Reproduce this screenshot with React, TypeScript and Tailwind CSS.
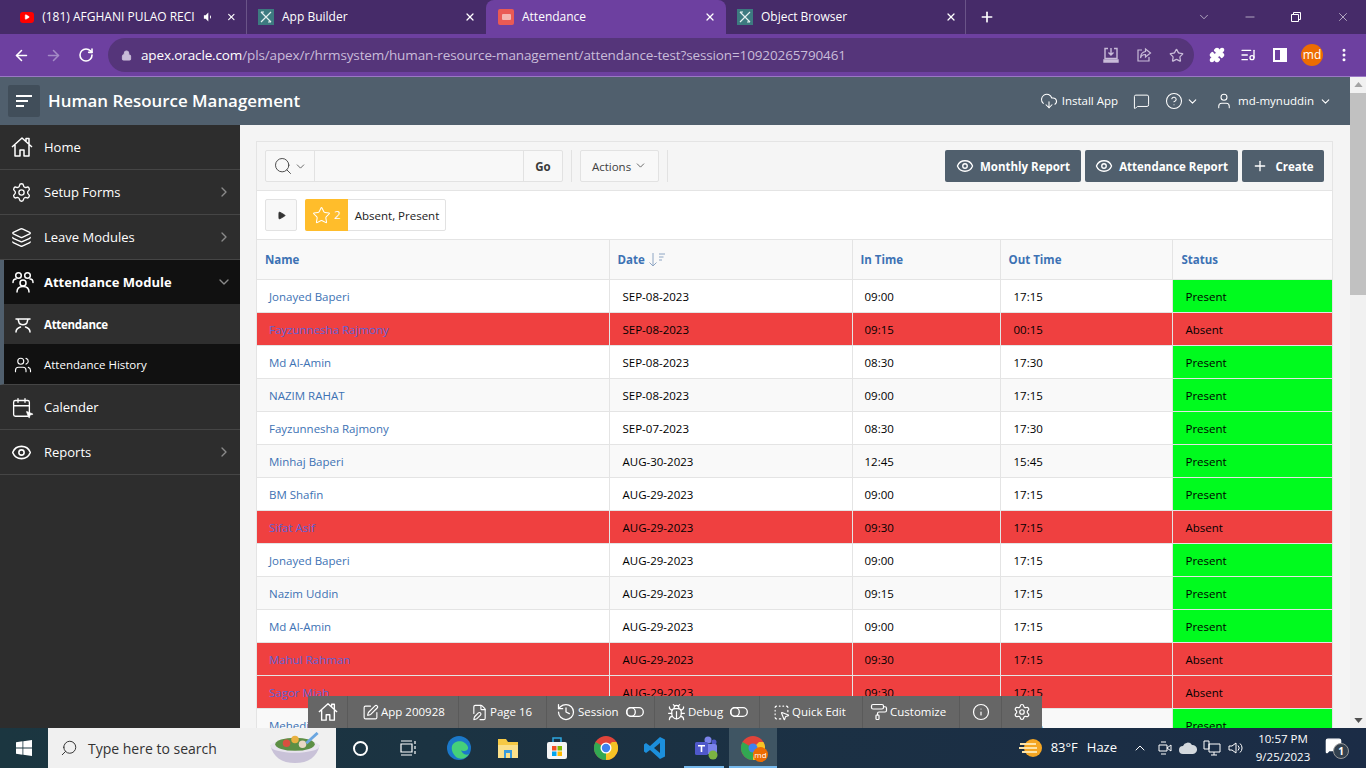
import {
  ArrowLeft,
  ArrowRight,
  Bug,
  Calendar,
  ChevronDown,
  ChevronRight,
  ChevronUp,
  CircleHelp,
  CloudDownload,
  Eye,
  FilePen,
  History,
  Info,
  Layers,
  ListMusic,
  Lock,
  MessageSquare,
  Minus,
  MousePointer2,
  MoreVertical,
  PaintRoller,
  Play,
  Plus,
  Puzzle,
  RotateCw,
  Search,
  Settings,
  SquareDashedMousePointer,
  SquarePen,
  Star,
  User,
  Users,
  X,
} from "lucide-react";

type Row = {
  name: string;
  date: string;
  inTime: string;
  outTime: string;
  status: "Present" | "Absent";
};

const rows: Row[] = [
  { name: "Jonayed Baperi", date: "SEP-08-2023", inTime: "09:00", outTime: "17:15", status: "Present" },
  { name: "Fayzunnesha Rajmony", date: "SEP-08-2023", inTime: "09:15", outTime: "00:15", status: "Absent" },
  { name: "Md Al-Amin", date: "SEP-08-2023", inTime: "08:30", outTime: "17:30", status: "Present" },
  { name: "NAZIM RAHAT", date: "SEP-08-2023", inTime: "09:00", outTime: "17:15", status: "Present" },
  { name: "Fayzunnesha Rajmony", date: "SEP-07-2023", inTime: "08:30", outTime: "17:30", status: "Present" },
  { name: "Minhaj Baperi", date: "AUG-30-2023", inTime: "12:45", outTime: "15:45", status: "Present" },
  { name: "BM Shafin", date: "AUG-29-2023", inTime: "09:00", outTime: "17:15", status: "Present" },
  { name: "Sifat Asif", date: "AUG-29-2023", inTime: "09:30", outTime: "17:15", status: "Absent" },
  { name: "Jonayed Baperi", date: "AUG-29-2023", inTime: "09:00", outTime: "17:15", status: "Present" },
  { name: "Nazim Uddin", date: "AUG-29-2023", inTime: "09:15", outTime: "17:15", status: "Present" },
  { name: "Md Al-Amin", date: "AUG-29-2023", inTime: "09:00", outTime: "17:15", status: "Present" },
  { name: "Mahul Rahman", date: "AUG-29-2023", inTime: "09:30", outTime: "17:15", status: "Absent" },
  { name: "Sagor Miah", date: "AUG-29-2023", inTime: "09:30", outTime: "17:15", status: "Absent" },
  { name: "Mehedi Hasan", date: "AUG-29-2023", inTime: "09:00", outTime: "17:15", status: "Present" },
];

function AppLogo() {
  return (
    <span className="flex h-4 w-4 items-center justify-center bg-[#3d7a80]">
      <svg viewBox="0 0 16 16" className="h-4 w-4" fill="none" stroke="#e6f1f1" strokeWidth="1.2">
        <path d="M3 3l10 10M13 3L3 13M3 3h3M10 13h3" />
      </svg>
    </span>
  );
}

function HomeIcon({ size }: { size: number }) {
  return (
    <svg viewBox="0 0 22 22" width={size} height={size} fill="none" stroke="currentColor" strokeWidth="1.5" strokeLinejoin="round">
      <path d="M1 11L11 2l10 9M4 9v11h5v-6h4v6h5V9M15 5V2.500h3V8" />
    </svg>
  );
}

function GroupIcon() {
  return (
    <svg viewBox="0 0 22 22" width={22} height={22} fill="none" stroke="currentColor" strokeWidth="1.5" strokeLinecap="round">
      <circle cx="6.500" cy="4.500" r="2.800" />
      <circle cx="15.500" cy="4.500" r="2.800" />
      <circle cx="11" cy="12" r="3" />
      <path d="M1 11.500c0-2.500 1.500-3.500 3-3.500M21 11.500c0-2.500-1.500-3.500-3-3.500M5 21c0-3.500 2.500-5.500 6-5.500s6 2 6 5.500" />
    </svg>
  );
}

function StudentIcon() {
  return (
    <svg viewBox="0 0 18 18" width={18} height={18} fill="none" stroke="currentColor" strokeWidth="1.5" strokeLinecap="round">
      <path d="M2 3h14M4 3l1 3.500c1 3 7 3 8 0L14 3M2 16c0-3.500 3-4.500 4.500-5M16 16c0-3.500-3-4.500-4.500-5" />
    </svg>
  );
}

function Tab({
  title,
  icon,
  className,
  extra,
}: {
  title: string;
  icon: React.ReactNode;
  className: string;
  extra?: React.ReactNode;
}) {
  return (
    <div className={`flex h-[34px] items-center text-[12px] ${className}`}>
      {icon}
      <span className="ml-[8px] flex-1 whitespace-nowrap">{title}</span>
      {extra}
      <X size={12} strokeWidth={2.5} className="text-white" />
    </div>
  );
}

function SideItem({
  icon,
  label,
  chevron,
}: {
  icon: React.ReactNode;
  label: string;
  chevron?: boolean;
}) {
  return (
    <div className="flex h-[45px] items-center border-b border-[#454545] pl-[11px] pr-[8px] text-white">
      <span className="w-[33px]">{icon}</span>
      <span className="flex-1 pt-[2px] text-[13px]">{label}</span>
      {chevron && <ChevronRight size={16} className="text-[#8a8a8a]" />}
    </div>
  );
}

function DevItem({
  icon,
  label,
  toggle,
  className,
}: {
  icon: React.ReactNode;
  label?: string;
  toggle?: boolean;
  className: string;
}) {
  return (
    <div className={`flex h-full items-center border-r border-[#5a5a5a] ${className}`}>
      {icon}
      {label && <span className="ml-[2px] whitespace-nowrap">{label}</span>}
      {toggle && (
        <svg viewBox="0 0 18 10" className="ml-[7px] h-[10px] w-[18px]" fill="none" stroke="white" strokeWidth="1.3">
          <rect x="0.700" y="0.700" width="16.600" height="8.600" rx="4.300" />
          <circle cx="5" cy="5" r="4.300" />
        </svg>
      )}
    </div>
  );
}

export default function App() {
  return (
    <div className="relative flex h-[768px] w-[1366px] flex-col overflow-hidden bg-[#f4f4f4] font-['Open_Sans',sans-serif] text-[11.5px] text-black">
      {/* browser tabs */}
      <div className="flex h-[34px] shrink-0 items-center bg-[#462b69] text-white">
        <Tab
          title="(181) AFGHANI PULAO RECI"
          className="w-[247px] border-r border-[#6a5488] pl-[20px] pr-[9px]"
          icon={
            <span className="flex h-[11px] w-[16px] items-center justify-center rounded-[3px] bg-[#f00]">
              <Play size={6} fill="white" stroke="white" />
            </span>
          }
          extra={
            <svg viewBox="0 0 12 12" className="ml-[8px] mr-[13px] h-3 w-3" fill="white">
              <path d="M1 4h2l3-3v10L3 8H1zM8 4v4l1-1V5z" />
            </svg>
          }
        />
        <Tab title="App Builder" className="w-[239px] pl-[11px] pr-[10px]" icon={<AppLogo />} />
        <Tab
          title="Attendance"
          className="w-[240px] rounded-t-[8px] bg-[#6d40a0] pl-[12px] pr-[10px]"
          icon={
            <span className="flex h-4 w-4 items-center justify-center rounded-[2px] bg-[#ea5a54]">
              <span className="h-[6px] w-[9px] rounded-[1px] bg-[#f5b5b0]" />
            </span>
          }
        />
        <Tab title="Object Browser" className="w-[240px] border-r border-[#6a5488] pl-[11px] pr-[8px]" icon={<AppLogo />} />
        <Plus size={16} strokeWidth={2.5} className="ml-[13px]" />
        <div className="ml-auto flex items-center pr-[16px]">
          <ChevronDown size={14} strokeWidth={1} className="mr-[32px]" />
          <Minus size={14} strokeWidth={1} className="mr-[33px]" />
          <svg viewBox="0 0 12 12" className="mr-[34px] h-3 w-3" fill="none" stroke="white">
            <path d="M1.500 3.500h7v7h-7zM3.500 3.500v-2h7v7h-2" />
          </svg>
          <X size={14} strokeWidth={1} />
        </div>
      </div>

      {/* address bar */}
      <div className="flex h-[43px] shrink-0 items-center border-b border-[#9a78c4] bg-[#6d40a0] text-white">
        <ArrowLeft size={17} strokeWidth={2.2} className="ml-[13px]" />
        <ArrowRight size={17} strokeWidth={2.2} className="ml-[15px] text-[#a48bc6]" />
        <RotateCw size={16} strokeWidth={2.4} className="ml-[16px]" />
        <div className="ml-[14px] flex h-[34px] w-[1086px] items-center rounded-full bg-[#55357a] pl-[13px] pr-[10px]">
          <Lock size={11} fill="#c9bcd9" stroke="#c9bcd9" />
          <span className="ml-[9px] text-[13.5px] tracking-[-0.13px] text-[#c9bcd9]">
            <span className="text-white">apex.oracle.com</span>
            /pls/apex/r/hrmsystem/human-resource-management/attendance-test?session=10920265790461
          </span>
          <div className="ml-auto flex items-center gap-[17px] text-[#c9bcd9]">
            <svg viewBox="0 0 16 16" className="h-4 w-4" fill="none" stroke="currentColor" strokeWidth="1.4">
              <path d="M5 1.500H2v10h12v-10h-3M8 1v7M5.500 5.500L8 8l2.500-2.500" />
              <path d="M1 13h14v2H1z" fill="currentColor" />
            </svg>
            <svg viewBox="0 0 16 16" className="h-4 w-4" fill="none" stroke="currentColor" strokeWidth="1.2">
              <path d="M6 3H2v11h11v-4M9.500 2l5 4-5 4V7.500C7 7.500 5 9 4.500 11c0-4 2-6 5-6.500z" />
            </svg>
            <Star size={15} />
          </div>
        </div>
        <Puzzle size={16} fill="white" className="ml-[15px]" />
        <ListMusic size={16} className="ml-[15px]" />
        <svg viewBox="0 0 16 16" className="ml-[16px] h-4 w-4" fill="white">
          <path d="M1 1h14v14H1zM3 3v10h5V3z" fillRule="evenodd" />
        </svg>
        <span className="ml-[13px] flex h-[22px] w-[22px] items-center justify-center rounded-full bg-[#ed6c02] text-[12px]">
          md
        </span>
        <MoreVertical size={16} strokeWidth={2.5} className="ml-[13px]" />
      </div>

      <div className="flex min-h-0 flex-1">
        <div className="flex min-w-0 flex-1 flex-col">
          {/* app header */}
          <div className="flex h-[48px] shrink-0 items-center bg-[#505f6d] text-white">
            <div className="ml-[8px] flex h-[32px] w-[32px] items-center justify-center rounded-[2px] bg-[#414e5a]">
              <svg viewBox="0 0 16 12" className="h-3 w-4" stroke="white" strokeWidth="2">
                <path d="M0 1h16M0 6h12M0 11h8" />
              </svg>
            </div>
            <span className="ml-[8px] text-[16.9px] font-semibold">Human Resource Management</span>
            <div className="ml-auto flex items-center pr-[18px] text-[11.5px]">
              <CloudDownload size={18} strokeWidth={1.4} />
              <span className="ml-[4px]">Install App</span>
              <MessageSquare size={17} strokeWidth={1.4} className="ml-[15px]" />
              <CircleHelp size={18} strokeWidth={1.4} className="ml-[15px]" />
              <ChevronDown size={13} className="ml-[3px]" />
              <User size={18} strokeWidth={1.4} className="ml-[16px]" />
              <span className="ml-[5px]">md-mynuddin</span>
              <ChevronDown size={13} className="ml-[5px]" />
            </div>
          </div>

          <div className="flex min-h-0 flex-1">
            {/* side nav */}
            <aside className="w-[240px] shrink-0 bg-[#2d2d2d]">
              <SideItem icon={<HomeIcon size={22} />} label="Home" />
              <SideItem icon={<Settings size={21} strokeWidth={1.5} />} label="Setup Forms" chevron />
              <SideItem icon={<Layers size={21} strokeWidth={1.5} />} label="Leave Modules" chevron />
              <div className="border-b border-[#454545] border-l-[4px] border-l-[#505f6d] bg-[#111111] text-white">
                <div className="flex h-[44px] items-center pl-[8px] pr-[8px]">
                  <span className="w-[32px]">
                    <GroupIcon />
                  </span>
                  <span className="flex-1 pt-[2px] text-[13px] font-bold">Attendance Module</span>
                  <ChevronDown size={16} className="text-[#8a8a8a]" />
                </div>
                <div className="flex h-[40px] items-center bg-[#2f2f2f] pl-[10px] pt-[1px]">
                  <span className="w-[30px]">
                    <StudentIcon />
                  </span>
                  <span className="text-[11.5px] font-bold tracking-[-0.3px]">Attendance</span>
                </div>
                <div className="flex h-[40px] items-center pl-[10px] pt-[1px]">
                  <span className="w-[30px]">
                    <Users size={18} strokeWidth={1.5} />
                  </span>
                  <span className="text-[11.5px]">Attendance History</span>
                </div>
              </div>
              <SideItem
                icon={
                  <span className="relative block h-5 w-5">
                    <Calendar size={21} strokeWidth={1.5} />
                    <MousePointer2 size={9} fill="white" className="absolute bottom-[-2px] right-[-3px]" />
                  </span>
                }
                label="Calender"
              />
              <SideItem icon={<Eye size={21} strokeWidth={1.8} />} label="Reports" chevron />
            </aside>

            {/* report */}
            <main className="min-w-0 flex-1 overflow-hidden pl-[16px] pr-[17px] pt-[16px]">
              <div className="border border-b-0 border-[#e4e4e4] bg-white">
                <div className="flex h-[49px] items-center border-b border-[#e4e4e4] bg-[#f5f5f5] pl-[8px] pr-[8px]">
                  <div className="flex h-[32px] w-[298px] items-stretch rounded-[2px] border border-[#e2e2e2] bg-[#f8f8f8]">
                    <div className="flex w-[49px] items-center justify-center gap-[1px] border-r border-[#e2e2e2] text-[#404040]">
                      <Search size={20} strokeWidth={1.1} />
                      <ChevronDown size={13} strokeWidth={1.4} />
                    </div>
                    <div className="flex-1" />
                    <div className="flex w-[39px] items-center justify-center border-l border-[#e2e2e2] pt-[1px] font-bold text-[#3a3a3a]">
                      Go
                    </div>
                  </div>
                  <div className="ml-[8px] h-[32px] border-l border-[#e2e2e2]" />
                  <div className="ml-[8px] flex h-[32px] w-[79px] items-center justify-center gap-[3px] rounded-[2px] border border-[#e2e2e2] bg-[#f8f8f8] pt-[1px] text-[#404040]">
                    Actions
                    <ChevronDown size={13} strokeWidth={1.4} className="mt-[-2px]" />
                  </div>
                  <div className="ml-[8px] h-[32px] border-l border-[#e2e2e2]" />
                  <div className="ml-auto flex gap-[4px] text-[11.5px] font-bold text-white">
                    <div className="flex h-[32px] w-[136px] items-center justify-center gap-[6px] rounded-[2px] bg-[#505f6d] pt-[1px]">
                      <Eye size={18} strokeWidth={1.8} className="mt-[-2px]" />
                      Monthly Report
                    </div>
                    <div className="flex h-[32px] w-[153px] items-center justify-center gap-[6px] rounded-[2px] bg-[#505f6d] pt-[1px]">
                      <Eye size={18} strokeWidth={1.8} className="mt-[-2px]" />
                      Attendance Report
                    </div>
                    <div className="flex h-[32px] w-[82px] items-center justify-center gap-[7px] rounded-[2px] bg-[#505f6d] pt-[1px]">
                      <Plus size={16} strokeWidth={2} className="mt-[-1px]" />
                      Create
                    </div>
                  </div>
                </div>

                <div className="flex h-[48px] items-center pl-[8px]">
                  <div className="flex h-[32px] w-[32px] items-center justify-center rounded-[2px] border border-[#e2e2e2] bg-[#f8f8f8]">
                    <Play size={9} fill="#333333" stroke="#333333" />
                  </div>
                  <div className="ml-[8px] flex h-[32px] items-stretch rounded-[2px] border border-[#e2e2e2]">
                    <div className="ml-[-1px] my-[-1px] flex w-[43px] items-center justify-center gap-[3px] rounded-l-[2px] bg-[#ffbd2b] text-white">
                      <Star size={19} strokeWidth={1.3} />2
                    </div>
                    <div className="flex w-[97px] items-center justify-center pl-[1px] pt-[1px] text-[#222222]">Absent, Present</div>
                  </div>
                </div>

                <table className="w-full table-fixed border-collapse text-[11.5px]">
                  <colgroup>
                    <col className="w-[352px]" />
                    <col className="w-[243px]" />
                    <col className="w-[148px]" />
                    <col className="w-[172px]" />
                    <col className="w-[160px]" />
                  </colgroup>
                  <thead>
                    <tr className="h-[40px] border-t border-[#e4e4e4] bg-[#f9f9f9] text-left font-bold text-[#3d72b4]">
                      <th className="pl-[8px] pt-[1px] font-bold">Name</th>
                      <th className="border-l border-[#e4e4e4] pl-[8px] pt-[1px] font-bold">
                        <span className="flex items-center gap-[3px]">
                          Date
                          <svg viewBox="0 0 18 16" className="h-4 w-[18px]" fill="none" stroke="#8ea6c4" strokeWidth="1">
                            <path d="M5 1v13M1.500 10.500L5 14l3.500-3.500M11 2h6M11 5h4.500M11 8h3" />
                          </svg>
                        </span>
                      </th>
                      <th className="border-l border-[#e4e4e4] pl-[8px] pt-[1px] font-bold">In Time</th>
                      <th className="border-l border-[#e4e4e4] pl-[8px] pt-[1px] font-bold">Out Time</th>
                      <th className="border-l border-[#e4e4e4] pl-[9px] pt-[1px] font-bold">Status</th>
                    </tr>
                  </thead>
                  <tbody>
                    {rows.map((row, i) => {
                      const absent = row.status === "Absent";
                      return (
                        <tr
                          key={i}
                          className={`h-[33px] border-t border-[#e4e4e4] ${
                            absent ? "bg-[#ef4040]" : i % 2 === 1 ? "bg-[#f9f9f9]" : "bg-white"
                          }`}
                        >
                          <td className={`pl-[12px] pt-[1px] ${absent ? "text-[#5c62d6]" : "text-[#3d72b4]"}`}>{row.name}</td>
                          <td className="border-l border-[#e4e4e4] pl-[13px] pt-[1px]">{row.date}</td>
                          <td className="border-l border-[#e4e4e4] pl-[12px] pt-[1px]">{row.inTime}</td>
                          <td className="border-l border-[#e4e4e4] pl-[13px] pt-[1px]">{row.outTime}</td>
                          <td className={`border-l border-[#e4e4e4] pl-[13px] pt-[1px] ${absent ? "" : "bg-[#00fb1e]"}`}>
                            {row.status}
                          </td>
                        </tr>
                      );
                    })}
                  </tbody>
                </table>
              </div>
            </main>
          </div>
        </div>

        {/* page scrollbar */}
        <div className="flex w-[16px] shrink-0 flex-col items-center bg-[#f1f1f1]">
          <svg viewBox="0 0 10 6" className="mt-[5px] h-[5px] w-[9px]" fill="#a3a3a3">
            <path d="M5 0l5 6H0z" />
          </svg>
          <div className="mt-[6px] h-[202px] w-full bg-[#c1c1c1]" />
          <svg viewBox="0 0 10 6" className="mb-[5px] mt-auto h-[5px] w-[9px]" fill="#505050">
            <path d="M0 0h10L5 6z" />
          </svg>
        </div>
      </div>

      {/* taskbar */}
      <div className="flex h-[40px] shrink-0 items-center bg-linear-to-r from-[#1b3640] to-[#1b2c46] text-white">
        <div className="flex w-[48px] justify-center">
          <svg viewBox="0 0 16 16" className="h-4 w-4" fill="white">
            <path d="M0 2.200l6.500-.9v6.300H0zM7.300 1.200L16 0v7.600H7.300zM0 8.400h6.500v6.300L0 13.800zM7.300 8.400H16V16l-8.700-1.200z" />
          </svg>
        </div>
        <div className="flex h-[40px] w-[288px] items-center bg-[#f0f0f0] pl-[12px] text-[14px] text-[#333333]">
          <Search size={18} strokeWidth={1.3} className="-scale-x-100" />
          <span className="ml-[10px]">Type here to search</span>
          <svg viewBox="0 0 56 34" className="ml-auto mr-[14px] h-[32px] w-[54px]">
            <path d="M2 14c2 12 12 19 26 19s24-7 26-19z" fill="#c9c2d8" />
            <ellipse cx="28" cy="15" rx="26" ry="7" fill="#e8e4ee" />
            <ellipse cx="28" cy="13" rx="21" ry="7" fill="#5d8f45" />
            <circle cx="19" cy="12" r="4" fill="#d9503f" />
            <circle cx="28" cy="8" r="4" fill="#e8b040" />
            <circle cx="36" cy="13" r="4" fill="#e9d8c4" />
            <path d="M40 12L52 1" stroke="#6aa6e0" strokeWidth="3" />
          </svg>
        </div>
        <span className="ml-[17px] h-[15px] w-[15px] rounded-full border-[2.5px] border-white" />
        <svg viewBox="0 0 16 16" className="ml-[32px] h-4 w-4" fill="none" stroke="white" strokeWidth="1.2">
          <path d="M1 1h11M1 15h11M1 4h11v8H1zM15 1v3M15 6v3M15 11v3" />
        </svg>
        {/* edge */}
        <svg viewBox="0 0 24 24" className="ml-[31px] h-6 w-6">
          <circle cx="12" cy="12" r="12" fill="#1b78c9" />
          <path d="M5 10c2-6 13-7 16 1 1 4-5 5-7 3 1 3 4 6 8 4-3 5-9 6-13 3-3-3-5-7-4-11z" fill="#45d07a" />
        </svg>
        {/* explorer */}
        <svg viewBox="0 0 24 24" className="ml-[25px] h-6 w-6">
          <path d="M2 3h8l2 3h10v16H2z" fill="#f6c944" />
          <path d="M2 9h20v13H2z" fill="#fbe08a" />
          <path d="M8 14h8v8h-2v-5h-4v5H8z" fill="#3a9bdc" />
        </svg>
        {/* store */}
        <svg viewBox="0 0 24 24" className="ml-[25px] h-6 w-6">
          <path d="M8 6V2h8v4" fill="none" stroke="#2ea7e0" strokeWidth="1.500" />
          <rect x="2" y="6" width="20" height="17" rx="2" fill="#f5f5f5" />
          <rect x="7" y="10" width="4.500" height="4.500" fill="#f25022" />
          <rect x="12.500" y="10" width="4.500" height="4.500" fill="#7fba00" />
          <rect x="7" y="15.500" width="4.500" height="4.500" fill="#00a4ef" />
          <rect x="12.500" y="15.500" width="4.500" height="4.500" fill="#ffb900" />
        </svg>
        {/* chrome */}
        <svg viewBox="0 0 24 24" className="ml-[25px] h-6 w-6">
          <circle cx="12" cy="12" r="12" fill="#e0443a" />
          <path d="M12 12L1.600 6A12 12 0 0 0 12 24l6-11z" fill="#32a852" />
          <path d="M12 12l6-6h4.400A12 12 0 0 1 12 24z" fill="#f7c325" />
          <circle cx="12" cy="12" r="5.500" fill="white" />
          <circle cx="12" cy="12" r="4.200" fill="#3f82ef" />
        </svg>
        {/* vs code */}
        <svg viewBox="0 0 24 24" className="ml-[25px] h-6 w-6">
          <path d="M17 1l5 2.500v17L17 23 7 14l-4 3-2-1.500V8.500L3 7l4 3z" fill="#1c8fdc" />
          <path d="M17 7l-6 5 6 5z" fill="#1b3242" />
        </svg>
        {/* teams */}
        <div className="relative ml-[27px] h-[40px] w-[24px]">
          <svg viewBox="0 0 24 24" className="mt-[8px] h-6 w-6">
            <circle cx="14" cy="4" r="3.500" fill="#7b83eb" />
            <circle cx="20" cy="6" r="2.500" fill="#5059c9" />
            <rect x="10" y="8" width="13" height="10" rx="2" fill="#7b83eb" />
            <rect x="1" y="6" width="13" height="13" rx="1.500" fill="#4f58ca" />
            <path d="M4 9h7v1.500H8.300V16H6.700v-5.500H4z" fill="white" />
            <circle cx="19" cy="19" r="4.500" fill="#7cb342" />
          </svg>
          <span className="absolute bottom-0 left-[-10px] h-[2px] w-[40px] bg-[#76b9ed]" />
        </div>
        {/* active chrome */}
        <div className="relative ml-[11px] flex h-[40px] w-[48px] items-center justify-center bg-[#3f5563]">
          <svg viewBox="0 0 24 24" className="h-6 w-6">
            <circle cx="12" cy="12" r="12" fill="#e0443a" />
            <path d="M12 12L1.600 6A12 12 0 0 0 12 24l6-11z" fill="#32a852" />
            <path d="M12 12l6-6h4.400A12 12 0 0 1 12 24z" fill="#f7c325" />
            <circle cx="12" cy="12" r="4.500" fill="#3f82ef" />
          </svg>
          <span className="absolute bottom-[6px] right-[9px] flex h-[15px] w-[15px] items-center justify-center rounded-full bg-[#ed6c02] text-[8px]">
            md
          </span>
          <span className="absolute bottom-0 left-0 h-[2px] w-full bg-[#76b9ed]" />
        </div>

        <div className="ml-auto flex items-center">
          <svg viewBox="0 0 26 26" className="h-[26px] w-[26px]">
            <circle cx="15" cy="13" r="9" fill="#f5a623" />
            <path d="M2 9h16M1 13h18M4 17h15" stroke="#fde3a7" strokeWidth="2" />
          </svg>
          <span className="ml-[7px] text-[13px]">83°F</span>
          <span className="ml-[9px] text-[13px]">Haze</span>
          <ChevronUp size={16} strokeWidth={1.5} className="ml-[15px]" />
          <svg viewBox="0 0 16 16" className="ml-[9px] h-4 w-4" fill="none" stroke="white">
            <path d="M2 5h8v6H2zM10 8l4-3v6zM4 2h5M4 14h5" />
          </svg>
          <svg viewBox="0 0 18 12" className="ml-[6px] h-3 w-[18px]" fill="#d4d9de">
            <path d="M4 12a4 4 0 0 1 0-8 5 5 0 0 1 9-1 4.500 4.500 0 0 1 1 9z" />
          </svg>
          <svg viewBox="0 0 18 16" className="ml-[6px] h-4 w-[18px]" fill="none" stroke="white">
            <path d="M1 1h5v8H1zM6 4h11v8H6zM11 12v3M8 15h6" />
          </svg>
          <svg viewBox="0 0 16 16" className="ml-[7px] h-4 w-4" fill="none" stroke="white">
            <path d="M1 6h3l4-3v10l-4-3H1zM10 5.500a3.500 3.500 0 0 1 0 5M12 3.500a6 6 0 0 1 0 9" />
          </svg>
          <div className="ml-[9px] flex w-[60px] flex-col items-center text-[11.5px] leading-[18px]">
            <span>10:57 PM</span>
            <span>9/25/2023</span>
          </div>
          <div className="relative ml-[12px] mr-[17px] h-[22px] w-[24px]">
            <MessageSquare size={17} fill="white" className="absolute left-0 top-0" />
            <span className="absolute bottom-0 right-0 flex h-[16px] w-[16px] items-center justify-center rounded-full border border-[#999999] bg-[#33414f] text-[10px] font-bold">
              1
            </span>
          </div>
        </div>
      </div>

      {/* developer toolbar */}
      <div className="absolute bottom-[40px] left-[308px] flex h-[32px] w-[734px] items-center bg-[#666666] text-[11.5px] text-white">
        <DevItem icon={<HomeIcon size={20} />} className="w-[40px] justify-center" />
        <DevItem icon={<SquarePen size={17} strokeWidth={1.6} />} label="App 200928" className="w-[111px] pl-[14px]" />
        <DevItem icon={<FilePen size={17} strokeWidth={1.6} />} label="Page 16" className="w-[88px] pl-[12px]" />
        <DevItem icon={<History size={20} strokeWidth={1.5} />} label="Session" toggle className="w-[108px] pl-[9px]" />
        <DevItem icon={<Bug size={19} strokeWidth={1.5} />} label="Debug" toggle className="w-[105px] pl-[12px]" />
        <DevItem icon={<SquareDashedMousePointer size={17} strokeWidth={1.6} />} label="Quick Edit" className="w-[103px] pl-[13px]" />
        <DevItem icon={<PaintRoller size={18} strokeWidth={1.6} />} label="Customize" className="w-[97px] pl-[7px]" />
        <DevItem icon={<Info size={18} strokeWidth={1.6} />} className="w-[42px] justify-center" />
        <div className="flex flex-1 justify-center">
          <Settings size={18} strokeWidth={1.6} />
        </div>
      </div>
    </div>
  );
}
